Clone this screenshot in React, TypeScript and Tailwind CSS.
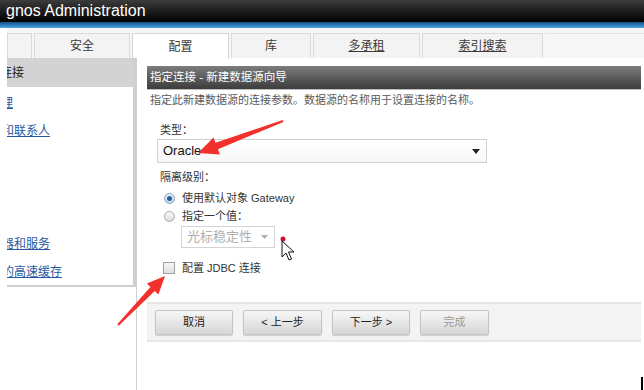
import React from "react";

function Tab({ label, w, active, link }: { label: string; w: number; active?: boolean; link?: boolean }) {
  return (
    <div
      className={
        "flex items-center justify-center border-x border-t text-[12px] text-[#3a3a3a] " +
        (active ? "bg-white border-[#d4d4d4] h-[26px] self-start" : "bg-[#f3f3f3] border-[#dadada] h-[25px]")
      }
      style={{ width: w }}
    >
      <span className={link ? "underline" : ""}>{label}</span>
    </div>
  );
}

function Btn({ label, w, disabled }: { label: string; w: string; disabled?: boolean }) {
  return (
    <div
      className={
        "h-[25px] flex items-center justify-center rounded-[2px] border border-[#c4c4c4] bg-linear-to-b from-[#f7f7f7] to-[#d6d6d6] text-[11px] shadow-[0_1px_1px_rgba(0,0,0,0.15)] " +
        w +
        (disabled ? " text-[#9a9a9a]" : " text-[#222]")
      }
    >
      {label}
    </div>
  );
}

export default function App() {
  return (
    <div className="relative w-[644px] h-[390px] overflow-hidden bg-white font-['Liberation_Sans','Noto_Sans_CJK_SC',sans-serif]">
      {/* title bar */}
      <div className="h-[22px] bg-linear-to-b from-[#3c3c3c] to-[#040404] flex items-center pl-[6px]">
        <span className="text-white text-[16px] leading-none">gnos Administration</span>
      </div>
      <div className="h-[6px] bg-linear-to-b from-[#0e4f88] to-[#4ea6e3]" />
      <div className="h-[5px] bg-[#f6f6f6] ml-[7px]" />
      {/* tabs */}
      <div className="flex h-[25px] bg-[#f6f6f6] ml-[7px] gap-[2px] items-end">
        <Tab label="" w={25} />
        <Tab label="安全" w={96} />
        <Tab label="配置" w={97} active />
        <Tab label="库" w={80} />
        <Tab label="多承租" w={107} link />
        <Tab label="索引搜索" w={121} link />
        <div className="flex-1 h-[25px] border-t border-[#e4e4e4] bg-[#f6f6f6]" />
      </div>
      {/* body */}
      <div className="flex h-[332px]">
        <div className="w-[7px]" />
        <div className="w-[130px] border-r border-[#d2d2d2]">
          <div className="h-[229px] border-r-[3px] border-b-2 border-[#cfcfcf] overflow-hidden flex flex-col">
            <div className="h-[29px] bg-[#d3d3d3] flex items-center text-[12px] text-[#222] whitespace-nowrap">
              <span className="-ml-[7px]">连接</span>
            </div>
            <div className="flex flex-col text-[12px] text-[#2759a0] whitespace-nowrap leading-[16px] mt-[8px]">
              <span className="-ml-[6px] underline h-[16px]">理</span>
              <span className="-ml-[5px] underline h-[16px] mt-[12px]">和联系人</span>
              <span className="-ml-[5px] underline h-[16px] mt-[97px]">器和服务</span>
              <span className="-ml-[5px] underline h-[16px] mt-[12px]">的高速缓存</span>
            </div>
          </div>
        </div>
        <div className="flex-1 pl-[10px] pt-[8px]">
          <div className="w-[494px] h-[24px] bg-linear-to-b from-[#7d7d7d] to-[#3d3d3d] flex items-center pl-[3px] border-b border-[#bdbdbd]">
            <span className="text-white text-[11.5px] whitespace-nowrap">指定连接 - 新建数据源向导</span>
          </div>
          <div className="mt-[2px] pl-[3px] h-[16px] leading-[16px] text-[11px] text-[#5a5a5a] whitespace-nowrap">
            指定此新建数据源的连接参数。数据源的名称用于设置连接的名称。
          </div>
          <div className="ml-[10px] flex flex-col">
            <div className="mt-[14px] ml-[3px] h-[16px] leading-[16px] text-[11px] text-[#333]">类型：</div>
            <div className="mt-[1px] w-[330px] h-[24px] border border-[#d0d0d0] bg-linear-to-b from-white to-[#f6f6f6] flex items-center justify-between pl-[5px] pr-[6px]">
              <span className="text-[13px] text-[#111]">Oracle</span>
              <svg width="8" height="5" viewBox="0 0 8 5"><path d="M0 0h8L4 5z" fill="#222" /></svg>
            </div>
            <div className="mt-[6px] ml-[3px] h-[16px] leading-[16px] text-[11px] text-[#333]">隔离级别：</div>
            <div className="mt-[5px] h-[16px] flex items-center">
              <div className="ml-[7px] w-[11px] h-[11px] rounded-full border border-[#8aa0c0] bg-linear-to-b from-[#e8f0fb] to-[#c9d8ee] flex items-center justify-center">
                <div className="w-[5px] h-[5px] rounded-full bg-[#2a5d9c]" />
              </div>
              <span className="ml-[7px] text-[11px] text-[#333] whitespace-nowrap">使用默认对象 Gateway</span>
            </div>
            <div className="mt-[2px] h-[16px] flex items-center">
              <div className="ml-[7px] w-[11px] h-[11px] rounded-full border border-[#a8a8a8] bg-linear-to-b from-[#fafafa] to-[#dcdcdc]" />
              <span className="ml-[7px] text-[11px] text-[#333] whitespace-nowrap">指定一个值：</span>
            </div>
            <div className="mt-[2px] ml-[24px] w-[94px] h-[22px] border border-[#d4d4d4] bg-white flex items-center justify-between pl-[5px] pr-[6px]">
              <span className="text-[13px] text-[#b0b0b0] whitespace-nowrap">光标稳定性</span>
              <svg width="7" height="4" viewBox="0 0 7 4"><path d="M0 0h7L3.5 4z" fill="#b0b0b0" /></svg>
            </div>
            <div className="mt-[12px] h-[16px] flex items-center">
              <div className="ml-[6px] w-[12px] h-[12px] border border-[#a0a0a0] bg-linear-to-b from-[#f8f8f8] to-[#dedede]" />
              <span className="ml-[7px] text-[11px] text-[#333] whitespace-nowrap">配置 JDBC 连接</span>
            </div>
          </div>
          <div className="mt-[26px] w-[494px] h-[40px] bg-[#f3f3f3] border-y-2 border-[#e6e6e6] flex items-center gap-[10px] pl-[8px]">
            <Btn label="取消" w="w-[78px]" />
            <Btn label="< 上一步" w="w-[79px]" />
            <Btn label="下一步 >" w="w-[78px]" />
            <Btn label="完成" w="w-[69px]" disabled />
          </div>
        </div>
      </div>

      {/* annotation overlays */}
      <svg className="absolute left-0 top-0 pointer-events-none" width="644" height="390" viewBox="0 0 644 390">
        <polygon
          points="198,153 219.9,154.4 217.9,149.3 283.4,121.9 282.6,120.1 215.5,142.7 213.5,137.6"
          fill="#f2302c"
        />
        <polygon
          points="165,276 158.4,294.5 154.8,291.1 118.7,325.7 117.3,324.3 150.4,286.9 146.8,283.5"
          fill="#f2302c"
        />
        <circle cx="283" cy="239" r="2.5" fill="#c8102e" />
        <path
          d="M282 241 L282 257 L286 253 L289 260 L291.5 259 L288.5 252 L294 252 Z"
          fill="#ffffff"
          stroke="#111"
          strokeWidth="1"
          strokeLinejoin="round"
        />
      </svg>
      <div className="absolute left-[641px] top-[377px] w-[2px] h-[13px] bg-black" />
    </div>
  );
}
